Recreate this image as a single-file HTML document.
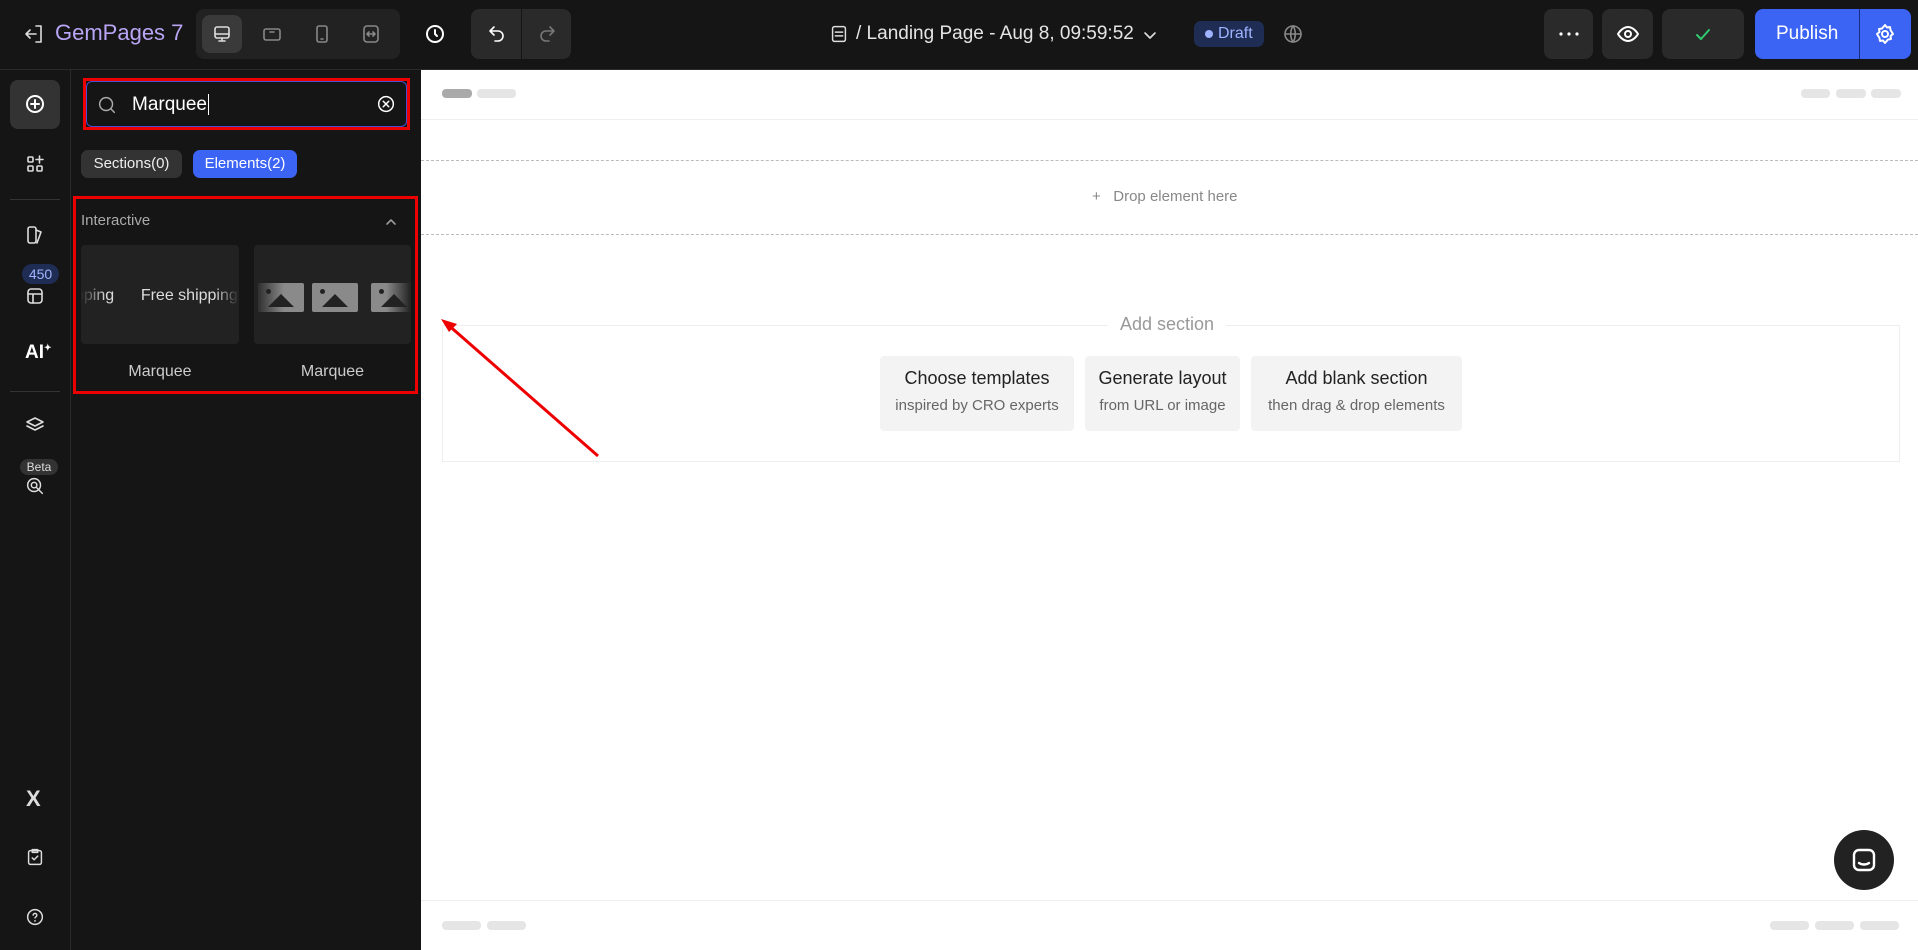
<!DOCTYPE html><html><head><meta charset="utf-8"><style>
*{box-sizing:border-box;margin:0;padding:0}
body{width:1918px;height:950px;overflow:hidden;background:#fff;font-family:"Liberation Sans",sans-serif;position:relative}
.a{position:absolute}
.top{left:0;top:0;width:1918px;height:70px;background:#151515;border-bottom:1px solid #2a2a2a}
.rail{left:0;top:70px;width:71px;height:880px;background:#151515;border-right:1px solid #2a2a2a}
.panel{left:71px;top:70px;width:350px;height:880px;background:#151515}
.btn{background:#2a2a2a;border-radius:8px}
svg{display:block}
.ic{stroke:#ddd;fill:none;stroke-width:1.6;stroke-linecap:round;stroke-linejoin:round}
.sk{background:#e5e5e5;border-radius:4px;height:9px}
.cb{background:#f3f3f3;border-radius:4px;text-align:center}
.cb b{display:block;font-weight:normal;font-size:18px;color:#222;margin-top:12px}
.cb i{display:block;font-style:normal;font-size:15px;color:#666;margin-top:8px}
.img{position:absolute;top:38px;width:46px;height:29px;background:#8a8a8a;border-radius:2px}
.img:before{content:"";position:absolute;left:8px;top:6px;width:5px;height:5px;border-radius:50%;background:#222}
.img:after{content:"";position:absolute;left:10px;bottom:5px;border-left:13px solid transparent;border-right:13px solid transparent;border-bottom:13px solid #222}
</style></head><body>
<div class="a top"></div>
<svg class="a" style="left:22px;top:22px" width="24" height="24" viewBox="0 0 24 24"><path class="ic" d="M14 4h5v16h-5M4 12h10M8 8l-4 4 4 4"/></svg>
<div class="a" style="left:55px;top:20px;font-size:22px;color:#b9a5f5">GemPages 7</div>
<div class="a btn" style="left:196px;top:9px;width:204px;height:50px;background:#222"></div>
<div class="a btn" style="left:202px;top:15px;width:40px;height:38px;background:#3a3a3a"></div>
<svg class="a" style="left:210px;top:22px" width="24" height="24" viewBox="0 0 24 24"><rect class="ic" x="5" y="5" width="14" height="11" rx="2"/><path class="ic" d="M5 12h14M9 19h6M12 16v3"/></svg>
<svg class="a" style="left:260px;top:22px" width="24" height="24" viewBox="0 0 24 24"><rect class="ic" style="stroke:#888" x="4" y="7" width="16" height="11" rx="2"/><path class="ic" style="stroke:#888" d="M10 10h4"/></svg>
<svg class="a" style="left:310px;top:22px" width="24" height="24" viewBox="0 0 24 24"><rect class="ic" style="stroke:#888" x="7" y="4" width="10" height="16" rx="2"/><path class="ic" style="stroke:#888" d="M11 17h2"/></svg>
<svg class="a" style="left:359px;top:22px" width="24" height="24" viewBox="0 0 24 24"><rect class="ic" style="stroke:#888" x="5" y="4" width="14" height="16" rx="3"/><path class="ic" style="stroke:#888" d="M9 12h6M10 10l-2 2 2 2M14 10l2 2-2 2"/></svg>
<svg class="a" style="left:423px;top:22px" width="24" height="24" viewBox="0 0 24 24"><circle class="ic" style="stroke:#fff;stroke-width:2" cx="12" cy="12" r="8"/><path class="ic" style="stroke:#fff;stroke-width:2" d="M12 8v4l2 2"/></svg>
<div class="a btn" style="left:471px;top:9px;width:100px;height:50px"></div>
<div class="a" style="left:521px;top:9px;width:1px;height:50px;background:#151515"></div>
<svg class="a" style="left:485px;top:22px" width="24" height="24" viewBox="0 0 24 24"><path class="ic" style="stroke:#fff" d="M9 5L5 9l4 4M5 9h8a5 5 0 010 10h-3"/></svg>
<svg class="a" style="left:535px;top:22px" width="24" height="24" viewBox="0 0 24 24"><path class="ic" style="stroke:#777" d="M15 5l4 4-4 4M19 9h-8a5 5 0 000 10h3"/></svg>
<svg class="a" style="left:828px;top:23px" width="22" height="22" viewBox="0 0 24 24"><rect class="ic" x="5" y="4" width="14" height="16" rx="2"/><path class="ic" d="M8 10h8M8 14h8"/></svg>
<div class="a" style="left:856px;top:23px;font-size:19px;color:#e5e5e5">/ Landing Page - Aug 8, 09:59:52</div>
<svg class="a" style="left:1142px;top:27px" width="16" height="16" viewBox="0 0 16 16"><path class="ic" d="M3 6l5 5 5-5"/></svg>
<div class="a" style="left:1194px;top:21px;width:70px;height:26px;background:#1f2d55;border-radius:7px;color:#9fb3ff;font-size:16px;line-height:26px;padding-left:24px">Draft</div>
<div class="a" style="left:1205px;top:30px;width:8px;height:8px;border-radius:50%;background:#9fb3ff"></div>
<svg class="a" style="left:1281px;top:22px" width="24" height="24" viewBox="0 0 24 24"><circle class="ic" style="stroke:#888" cx="12" cy="12" r="8"/><path class="ic" style="stroke:#888" d="M4 12h16M12 4c-3 4-3 12 0 16M12 4c3 4 3 12 0 16"/></svg>
<div class="a btn" style="left:1544px;top:9px;width:49px;height:50px"></div>
<svg class="a" style="left:1556px;top:28px" width="26" height="12"><circle cx="5" cy="6" r="1.6" fill="#fff"/><circle cx="13" cy="6" r="1.6" fill="#fff"/><circle cx="21" cy="6" r="1.6" fill="#fff"/></svg>
<div class="a btn" style="left:1602px;top:9px;width:51px;height:50px"></div>
<svg class="a" style="left:1616px;top:22px" width="24" height="24" viewBox="0 0 24 24"><path class="ic" style="stroke:#fff;stroke-width:2" d="M2 12s4-7 10-7 10 7 10 7-4 7-10 7S2 12 2 12z"/><circle class="ic" style="stroke:#fff;stroke-width:2" cx="12" cy="12" r="3"/></svg>
<div class="a btn" style="left:1662px;top:9px;width:82px;height:50px"></div>
<svg class="a" style="left:1694px;top:26px" width="18" height="18" viewBox="0 0 18 18"><path class="ic" style="stroke:#2ecc71;stroke-width:2" d="M3 9l4 4 8-9"/></svg>
<div class="a" style="left:1755px;top:9px;width:156px;height:50px;background:#3c64f4;border-radius:8px"></div>
<div class="a" style="left:1859px;top:9px;width:1px;height:50px;background:#1a2e80"></div>
<div class="a" style="left:1776px;top:23px;color:#fff;font-size:19px;line-height:22px">Publish</div>
<svg class="a" style="left:1873px;top:22px" width="24" height="24" viewBox="0 0 24 24"><circle class="ic" style="stroke:#fff;stroke-width:2" cx="12" cy="12" r="3"/><path class="ic" style="stroke:#fff;stroke-width:2" d="M12 3l2 2.5 3-.5.5 3L20 12l-2.5 2 .5 3-3 .5L12 21l-2-2.5-3 .5-.5-3L4 12l2.5-2-.5-3 3-.5z"/></svg>

<div class="a rail"></div>
<div class="a btn" style="left:10px;top:80px;width:50px;height:49px;background:#333"></div>
<svg class="a" style="left:23px;top:92px" width="24" height="24" viewBox="0 0 24 24"><circle class="ic" style="stroke:#fff;stroke-width:2" cx="12" cy="12" r="8"/><path class="ic" style="stroke:#fff;stroke-width:2" d="M12 8v8M8 12h8"/></svg>
<svg class="a" style="left:23px;top:152px" width="24" height="24" viewBox="0 0 24 24"><rect class="ic" x="5" y="5" width="5" height="5" rx="1"/><rect class="ic" x="5" y="14" width="5" height="5" rx="1"/><rect class="ic" x="14" y="14" width="5" height="5" rx="1"/><path class="ic" d="M16.5 4v7M13 7.5h7"/></svg>
<div class="a" style="left:10px;top:199px;width:50px;height:1px;background:#333"></div>
<svg class="a" style="left:23px;top:223px" width="24" height="24" viewBox="0 0 24 24"><rect class="ic" x="5" y="4" width="8" height="16" rx="2"/><path class="ic" d="M13 7l5 2-4 11"/></svg>
<div class="a" style="left:22px;top:264px;width:37px;height:20px;border-radius:10px;background:#1f2d55;color:#9fb3ff;font-size:14px;text-align:center;line-height:20px">450</div>
<svg class="a" style="left:23px;top:284px" width="24" height="24" viewBox="0 0 24 24"><rect class="ic" x="5" y="5" width="14" height="14" rx="3"/><path class="ic" d="M5 10h14M10 10v9"/></svg>
<div class="a" style="left:25px;top:342px;color:#fff;font-size:19px;font-weight:bold">AI<sup style="font-size:9px">✦</sup></div>
<div class="a" style="left:10px;top:391px;width:50px;height:1px;background:#333"></div>
<svg class="a" style="left:23px;top:414px" width="24" height="24" viewBox="0 0 24 24"><path class="ic" d="M12 4l8 4-8 4-8-4zM4 12l8 4 8-4"/></svg>
<div class="a" style="left:20px;top:459px;width:38px;height:16px;background:#333;border-radius:8px;color:#ddd;font-size:12px;text-align:center;line-height:16px">Beta</div>
<svg class="a" style="left:24px;top:475px" width="22" height="22" viewBox="0 0 24 24"><circle class="ic" cx="11" cy="11" r="7"/><circle class="ic" cx="11" cy="11" r="3"/><path class="ic" d="M14 14l6 6"/></svg>
<div class="a" style="left:26px;top:786px;color:#ddd;font-size:22px;font-weight:bold">X</div>
<svg class="a" style="left:24px;top:846px" width="22" height="22" viewBox="0 0 24 24"><rect class="ic" x="5" y="5" width="14" height="15" rx="2"/><path class="ic" d="M9 4h6v3H9zM9 13l2 2 4-4"/></svg>
<svg class="a" style="left:24px;top:906px" width="22" height="22" viewBox="0 0 24 24"><circle class="ic" cx="12" cy="12" r="8"/><path class="ic" d="M10 10a2 2 0 114 0c0 2-2 2-2 3M12 16v.5"/></svg>

<div class="a panel"></div>
<div class="a" style="left:83px;top:78px;width:327px;height:52px;border:3px solid #e00;"></div>
<div class="a" style="left:86px;top:81px;width:321px;height:46px;border:1px solid #4a4fd0;border-radius:6px;background:#151515"></div>
<svg class="a" style="left:96px;top:94px" width="22" height="22" viewBox="0 0 24 24"><circle class="ic" style="stroke:#aaa" cx="11" cy="11" r="7"/><path class="ic" style="stroke:#aaa" d="M16 16l4 4"/></svg>
<div class="a" style="left:132px;top:94px;color:#fff;font-size:19px">Marquee<span style="border-left:1px solid #fff;margin-left:1px"></span></div>
<svg class="a" style="left:375px;top:93px" width="22" height="22" viewBox="0 0 24 24"><circle class="ic" style="stroke:#fff" cx="12" cy="12" r="8"/><path class="ic" style="stroke:#fff" d="M9 9l6 6M15 9l-6 6"/></svg>
<div class="a" style="left:81px;top:150px;width:101px;height:28px;background:#333;border-radius:7px;color:#eee;font-size:15px;text-align:center;line-height:28px">Sections(0)</div>
<div class="a" style="left:193px;top:150px;width:104px;height:28px;background:#3c64f4;border-radius:7px;color:#fff;font-size:15px;text-align:center;line-height:28px">Elements(2)</div>
<div class="a" style="left:73px;top:196px;width:345px;height:198px;border:3px solid #e00"></div>
<div class="a" style="left:81px;top:212px;color:#aaa;font-size:15px">Interactive</div>
<svg class="a" style="left:384px;top:215px" width="14" height="14" viewBox="0 0 14 14"><path class="ic" style="stroke:#999" d="M3 9l4-4 4 4"/></svg>
<div class="a" style="left:81px;top:245px;width:158px;height:99px;background:#222;border-radius:4px;overflow:hidden">
<div class="a" style="left:-6px;top:42px;color:#ddd;font-size:16px;white-space:nowrap">pping&nbsp;&nbsp;&nbsp;&nbsp;&nbsp;&nbsp;Free shipping</div>
<div class="a" style="left:0;top:0;width:25px;height:99px;background:linear-gradient(90deg,#222,transparent)"></div>
<div class="a" style="right:0;top:0;width:25px;height:99px;background:linear-gradient(270deg,#222,transparent)"></div></div>
<div class="a" style="left:254px;top:245px;width:157px;height:99px;background:#222;border-radius:4px;overflow:hidden">
<div class="img" style="left:4px"></div>
<div class="img" style="left:58px"></div>
<div class="img" style="left:117px"></div>
<div class="a" style="left:0;top:0;width:30px;height:99px;background:linear-gradient(90deg,#222,transparent)"></div>
<div class="a" style="right:0;top:0;width:25px;height:99px;background:linear-gradient(270deg,#222,transparent)"></div></div>
<div class="a" style="left:81px;top:363px;width:158px;text-align:center;color:#ccc;font-size:16px">Marquee</div>
<div class="a" style="left:254px;top:363px;width:157px;text-align:center;color:#ccc;font-size:16px">Marquee</div>

<div class="a sk" style="left:442px;top:89px;width:30px;background:#aaa"></div>
<div class="a sk" style="left:477px;top:89px;width:39px"></div>
<div class="a sk" style="left:1801px;top:89px;width:29px"></div>
<div class="a sk" style="left:1836px;top:89px;width:30px"></div>
<div class="a sk" style="left:1871px;top:89px;width:30px"></div>
<div class="a" style="left:421px;top:119px;width:1497px;height:1px;background:#eee"></div>
<div class="a" style="left:421px;top:160px;width:1497px;height:75px;border-top:1px dashed #bbb;border-bottom:1px dashed #bbb"></div>
<div class="a" style="left:1092px;top:188px;color:#888;font-size:15px">+&nbsp;&nbsp;&nbsp;Drop element here</div>
<div class="a" style="left:442px;top:325px;width:1458px;height:137px;border:1px solid #eee"></div>
<div class="a" style="left:1108px;top:314px;background:#fff;padding:0 12px;color:#999;font-size:18px">Add section</div>
<div class="a cb" style="left:880px;top:356px;width:194px;height:75px"><b>Choose templates</b><i>inspired by CRO experts</i></div>
<div class="a cb" style="left:1085px;top:356px;width:155px;height:75px"><b>Generate layout</b><i>from URL or image</i></div>
<div class="a cb" style="left:1251px;top:356px;width:211px;height:75px"><b>Add blank section</b><i>then drag &amp; drop elements</i></div>
<svg class="a" style="left:421px;top:300px" width="200" height="170"><line x1="177" y1="156" x2="25" y2="23" stroke="#e00" stroke-width="3"/><path d="M20 19l16 5-8 8z" fill="#e00"/></svg>
<div class="a" style="left:421px;top:900px;width:1497px;height:1px;background:#eee"></div>
<div class="a sk" style="left:442px;top:921px;width:39px"></div>
<div class="a sk" style="left:487px;top:921px;width:39px"></div>
<div class="a sk" style="left:1770px;top:921px;width:39px"></div>
<div class="a sk" style="left:1815px;top:921px;width:39px"></div>
<div class="a sk" style="left:1860px;top:921px;width:39px"></div>
<div class="a" style="left:1834px;top:830px;width:60px;height:60px;border-radius:50%;background:#222"></div>
<svg class="a" style="left:1850px;top:846px" width="28" height="28" viewBox="0 0 28 28"><rect x="4" y="4" width="20" height="20" rx="5" fill="none" stroke="#fff" stroke-width="2.4"/><path d="M9 17c3 2 7 2 10 0" stroke="#fff" stroke-width="2.4" fill="none" stroke-linecap="round"/></svg>
</body></html>
